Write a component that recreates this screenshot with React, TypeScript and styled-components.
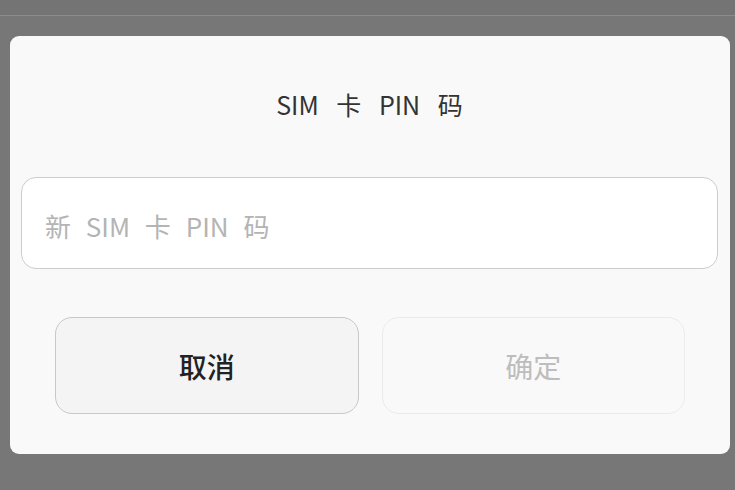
import styled, { createGlobalStyle } from 'styled-components';

const GlobalStyle = createGlobalStyle`
  html, body {
    margin: 0;
    padding: 0;
    background: #777777;
  }
  body {
    font-family: "Noto Sans CJK SC", sans-serif;
  }
`;

const Screen = styled.div`
  width: 735px;
  height: 490px;
  background: #777777;
  display: flex;
  flex-direction: column;
  overflow: hidden;
`;

const StatusStrip = styled.div`
  height: 15px;
  background: #747474;
  border-bottom: 1px solid #8c8c8c;
  flex-shrink: 0;
`;

const Dialog = styled.div`
  margin: 20px 5px 0 10px;
  height: 418px;
  box-sizing: border-box;
  background: #f9f9f9;
  border-radius: 9px;
  display: flex;
  flex-direction: column;
  padding: 51px 12px 0 11px;
`;

const Title = styled.div`
  text-align: center;
  font-size: 25px;
  line-height: 34px;
  color: #333333;
  word-spacing: 12px;
`;

const PinInput = styled.input`
  margin-top: 56px;
  height: 92px;
  box-sizing: border-box;
  border: 1px solid #cccccc;
  border-radius: 15px;
  background: #ffffff;
  padding: 4px 23px 0;
  font-family: inherit;
  font-size: 26px;
  color: #333333;
  word-spacing: 9px;
  outline: none;

  &::placeholder {
    color: #b4b4b4;
  }
`;

const ButtonRow = styled.div`
  margin-top: 48px;
  padding: 0 33px 0 34px;
  display: grid;
  grid-template-columns: 1fr 1fr;
  gap: 23px;
`;

const DialogButton = styled.button<{ $disabled?: boolean }>`
  height: 97px;
  box-sizing: border-box;
  border-radius: 17px;
  border: 1px solid ${(p) => (p.$disabled ? '#ebebeb' : '#c8c8c8')};
  background: ${(p) => (p.$disabled ? '#f9f9f9' : '#f4f4f4')};
  color: ${(p) => (p.$disabled ? '#bdbdbd' : '#222222')};
  font-family: "Noto Sans CJK SC", sans-serif;
  font-size: 28px;
  font-weight: ${(p) => (p.$disabled ? 400 : 500)};
  padding: 0;
`;

const App = () => {
  return (
    <Screen>
      <GlobalStyle />
      <StatusStrip />
      <Dialog>
        <Title>SIM 卡 PIN 码</Title>
        <PinInput type="password" placeholder="新 SIM 卡 PIN 码" />
        <ButtonRow>
          <DialogButton>取消</DialogButton>
          <DialogButton $disabled>确定</DialogButton>
        </ButtonRow>
      </Dialog>
    </Screen>
  );
};

export default App;
